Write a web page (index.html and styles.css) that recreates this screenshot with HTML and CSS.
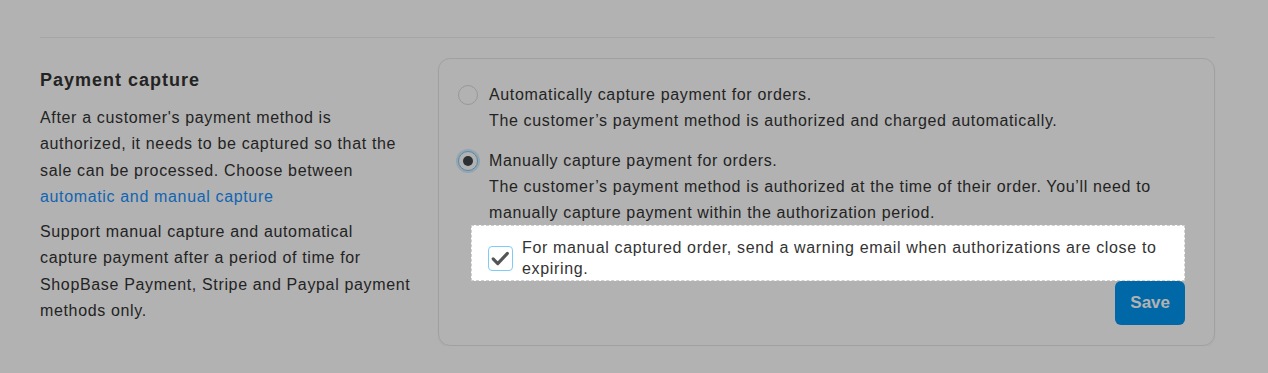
FILE: index.html
```html
<!DOCTYPE html>
<html lang="en">
<head>
    <meta charset="UTF-8">
    <title>Payment capture</title>
    <link rel="stylesheet" href="styles.css">
</head>
<body>
<div class="page">
    <div class="divider"></div>
    <div class="section">
        <div class="intro">
            <h2>Payment capture</h2>
            <p>After a customer's payment method is authorized, it needs to be captured so that the sale can be processed. Choose between <a href="#">automatic and manual capture</a></p>
            <p>Support manual capture and automatical capture payment after a period of time for ShopBase Payment, Stripe and Paypal payment methods only.</p>
        </div>
        <div class="card">
            <label class="option">
                <span class="radio"></span>
                <span class="option-text">
                    Automatically capture payment for orders.<br>
                    The customer’s payment method is authorized and charged automatically.
                </span>
            </label>
            <label class="option">
                <span class="radio checked"></span>
                <span class="option-text">
                    Manually capture payment for orders.<br>
                    The customer’s payment method is authorized at the time of their order. You’ll need to manually capture payment within the authorization period.
                </span>
            </label>
            <label class="check-row">
                <span class="checkbox">
                    <svg width="25" height="25" viewBox="0 0 25 25"><path d="M4.5 13 L9.5 18 L20 7" fill="none" stroke="#555" stroke-width="3.4" stroke-linecap="round" stroke-linejoin="round"/></svg>
                </span>
                <span class="check-text">For manual captured order, send a warning email when authorizations are close to expiring.</span>
            </label>
            <div class="card-footer">
                <button class="save-button">Save</button>
            </div>
        </div>
    </div>
</div>

<!-- tour overlay, the highlighted row sits above it -->
<div class="overlay"></div>
</body>
</html>
```

FILE: styles.css
```css
body {
    margin: 0;
    font-family: 'Liberation Sans', Arial, sans-serif;
    font-size: 16px;
    letter-spacing: 0.65px; /* hinted Arial runs wider */
    color: #333;
    background-color: #fff;
}
.page {
    width: 1175px;
    padding: 37px 0 0 40px;
}
.divider {
    border-top: 1px solid #ececec;
}
.section {
    display: flex;
    gap: 26px;
    margin-top: 20px;
}
.intro {
    width: 372px;
    padding-top: 10px;
}
.intro h2 {
    margin: 0 0 13px;
    font-size: 18px;
    line-height: 24px;
    font-weight: bold;
    letter-spacing: 1px;
}
.intro p {
    margin: 0 0 9px;
    line-height: 26.3px;
}
.intro a {
    color: #1890ff;
    text-decoration: none;
}
.card {
    flex: 1;
    border: 1px solid #e6e6e6;
    border-radius: 12px;
    padding: 23px 19px 20px;
    box-shadow: 0 1px 2px rgba(0, 0, 0, 0.05);
}
.option {
    display: flex;
    gap: 11px;
    line-height: 26px;
}
.option + .option {
    margin-top: 14px;
}
.option-text {
    max-width: 680px;
}
.radio {
    flex: none;
    width: 20px;
    height: 20px;
    margin-top: 3px;
    box-sizing: border-box;
    border: 1px solid #dadada;
    border-radius: 50%;
    background-color: #fff;
    display: flex;
    align-items: center;
    justify-content: center;
}
.radio.checked {
    border-color: #7fc4f2;
    box-shadow: 0 0 0 2px rgba(0, 149, 240, 0.18);
}
.radio.checked::after {
    content: '';
    width: 10px;
    height: 10px;
    border-radius: 50%;
    background-color: #414549;
}
.check-row {
    position: relative;
    z-index: 11;
    display: flex;
    gap: 9px;
    margin: -1px 10px 0 13px;
    padding: 11px 16px 1px;
    border: 1px dashed #cfcfcf;
    background-color: #fff;
    line-height: 21px;
}
.checkbox {
    flex: none;
    width: 25px;
    height: 25px;
    margin-top: 9px;
    box-sizing: border-box;
    border: 1px solid #7fcbf8;
    border-radius: 4px;
    display: flex;
    align-items: center;
    justify-content: center;
}
.checkbox svg {
    display: block;
}
.check-text {
    max-width: 645px;
}
.card-footer {
    display: flex;
    justify-content: flex-end;
    padding-right: 10px;
}
.save-button {
    height: 44px;
    padding: 0 15px;
    border: none;
    border-radius: 6px;
    background-color: #0095f0;
    color: #fff;
    font-family: 'Liberation Sans', Arial, sans-serif;
    font-size: 17px;
    font-weight: bold;
    cursor: pointer;
}
.overlay {
    position: fixed;
    top: 0;
    left: 0;
    right: 0;
    bottom: 0;
    z-index: 10;
    background-color: rgba(0, 0, 0, 0.3);
}
```
